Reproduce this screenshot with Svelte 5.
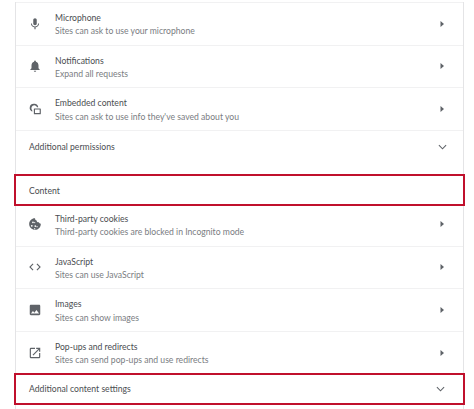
<script>
  const permissions = [
    { icon: "mic", title: "Microphone", sub: "Sites can ask to use your microphone" },
    { icon: "bell", title: "Notifications", sub: "Expand all requests" },
    { icon: "embed", title: "Embedded content", sub: "Sites can ask to use info they've saved about you" },
  ];
  const content = [
    { icon: "cookie", title: "Third-party cookies", sub: "Third-party cookies are blocked in Incognito mode" },
    { icon: "code", title: "JavaScript", sub: "Sites can use JavaScript" },
    { icon: "image", title: "Images", sub: "Sites can show images" },
    { icon: "popup", title: "Pop-ups and redirects", sub: "Sites can send pop-ups and use redirects" },
  ];
</script>

{#snippet icon(name)}
  <svg class="icon" viewBox="0 0 24 24" aria-hidden="true">
    {#if name === "mic"}
      <path d="M12 14c1.700 0 3-1.300 3-3V5c0-1.700-1.300-3-3-3S9 3.300 9 5v6c0 1.700 1.300 3 3 3z" />
      <path d="M17.300 11c0 3-2.500 5.100-5.300 5.100S6.700 14 6.700 11H5c0 3.400 2.700 6.200 6 6.700V21h2v-3.300c3.300-.5 6-3.300 6-6.700h-1.700z" />
    {:else if name === "bell"}
      <path d="M12 22c1.100 0 2-.9 2-2h-4c0 1.100.9 2 2 2zm6-6v-5c0-3.100-1.600-5.600-4.500-6.300V4c0-.8-.7-1.500-1.500-1.500s-1.500.7-1.500 1.500v.7C7.600 5.400 6 7.900 6 11v5l-2 2v1h16v-1l-2-2z" />
    {:else if name === "embed"}
      <path d="M10 3a7 7 0 0 0-2.700 13.500v-2.200A5 5 0 1 1 15.500 9h2.100A7 7 0 0 0 10 3z" />
      <path d="M11 11h10a1 1 0 0 1 1 1v8a1 1 0 0 1-1 1H11a1 1 0 0 1-1-1v-8a1 1 0 0 1 1-1zm1 2v6h8v-6h-8z" fill-rule="evenodd" />
    {:else if name === "cookie"}
      <path fill-rule="evenodd" d="M21.900 11.500c-1.800 0-2.900-1-3.200-2.400-1.900.3-3.800-1-3.900-3.200-1.700-.2-3-1.700-2.700-3.800C6.600 1.900 2 6.400 2 12c0 5.500 4.500 10 10 10 5.700 0 10.300-4.800 9.900-10.500zM8.500 7.500a1.500 1.500 0 1 1 0 3 1.500 1.500 0 0 1 0-3zm-2 6a1.500 1.500 0 1 1 0 3 1.500 1.500 0 0 1 0-3zm6 .5a1.500 1.500 0 1 1 0 3 1.500 1.500 0 0 1 0-3zm-1-3.500a1 1 0 1 1 0-2 1 1 0 0 1 0 2zm4 7a1 1 0 1 1 0-2 1 1 0 0 1 0 2zm-4 1.500a1 1 0 1 1 0 2 1 1 0 0 1 0-2z" />
    {:else if name === "code"}
      <path d="M9.400 16.600 4.800 12l4.600-4.600L8 6l-6 6 6 6 1.400-1.400zm5.200 0 4.600-4.600-4.600-4.600L16 6l6 6-6 6-1.400-1.400z" />
    {:else if name === "image"}
      <path d="M21 19V5c0-1.100-.9-2-2-2H5c-1.100 0-2 .9-2 2v14c0 1.100.9 2 2 2h14c1.100 0 2-.9 2-2zM8.500 13.500l2.500 3 3.500-4.500 4.500 6H5l3.500-4.500z" />
    {:else if name === "popup"}
      <path d="M19 19H5V5h7V3H5a2 2 0 0 0-2 2v14a2 2 0 0 0 2 2h14a2 2 0 0 0 2-2v-7h-2v7z" />
      <path d="M14 3v2h3.600l-9.800 9.800 1.400 1.400L19 6.400V10h2V3h-7z" />
    {/if}
  </svg>
{/snippet}

{#snippet arrow()}
  <svg class="arrow" viewBox="0 0 6 8" aria-hidden="true"><path d="M1.500 1 5 4 1.500 7z" /></svg>
{/snippet}

{#snippet chevron()}
  <svg class="chevron" viewBox="0 0 10 6" aria-hidden="true"><path d="M1 1l4 4 4-4" /></svg>
{/snippet}

{#snippet row(item)}
  <div class="row">
    <span class="icon-cell">{@render icon(item.icon)}</span>
    <div class="text">
      <div class="title">{item.title}</div>
      <div class="sub">{item.sub}</div>
    </div>
    {@render arrow()}
  </div>
{/snippet}

<div class="page">
  <div class="card">
    {#each permissions as item}
      {@render row(item)}
    {/each}
    <div class="plain">
      <span class="title">Additional permissions</span>
      {@render chevron()}
    </div>
    <div class="highlight">
      <span class="title">Content</span>
    </div>
    <div class="group">
      {#each content as item}
        {@render row(item)}
      {/each}
    </div>
    <div class="highlight">
      <span class="title">Additional content settings</span>
      {@render chevron()}
    </div>
  </div>
</div>

<style>
  :global(body) {
    background: #fff;
  }

  .page {
    width: 474px;
    height: 409px;
    overflow: hidden;
    padding: 2px 10px 0 15px;
    box-sizing: border-box;
    font-family: Lato, "Open Sans", "Liberation Sans", sans-serif;
  }

  .card {
    height: 407px;
    border-left: 1px solid #e4e4e6;
    border-right: 1px solid #e4e4e6;
    box-sizing: border-box;
    background: #fff;
  }

  .row {
    height: 42.67px;
    box-sizing: border-box;
    display: flex;
    align-items: center;
    padding: 0 18px 0 12px;
    border-top: 1px solid #f1f1f2;
  }

  .icon-cell {
    width: 27px;
    display: flex;
    flex: none;
  }

  .icon {
    width: 14px;
    height: 14px;
    fill: #5f6368;
  }

  .text {
    flex: 1;
    margin-top: 1px;
  }

  .title {
    font-size: 8.650px;
    line-height: 13.300px;
    color: #4a4d51;
  }

  .sub {
    font-size: 8.650px;
    line-height: 13.300px;
    color: #7a7d82;
  }

  .arrow {
    width: 6px;
    height: 8px;
    fill: #5f6368;
  }

  .chevron {
    width: 9px;
    height: 6px;
    margin-right: -1.500px;
    fill: none;
    stroke: #5f6368;
    stroke-width: 1.200px;
  }

  .plain {
    height: 44px;
    display: flex;
    align-items: center;
    justify-content: space-between;
    padding: 0 18px 11px 13px;
    box-sizing: border-box;
    border-top: 1px solid #f1f1f2;
  }

  .highlight {
    height: 32px;
    margin: 0 -2px;
    padding: 1px 20px 0 13px;
    display: flex;
    align-items: center;
    justify-content: space-between;
    box-sizing: border-box;
    border: 2px solid #c0102c;
  }

  .group {
    margin: -3px 0 -1px;
  }

  .group .row:first-child {
    border-top: 0;
  }
</style>
